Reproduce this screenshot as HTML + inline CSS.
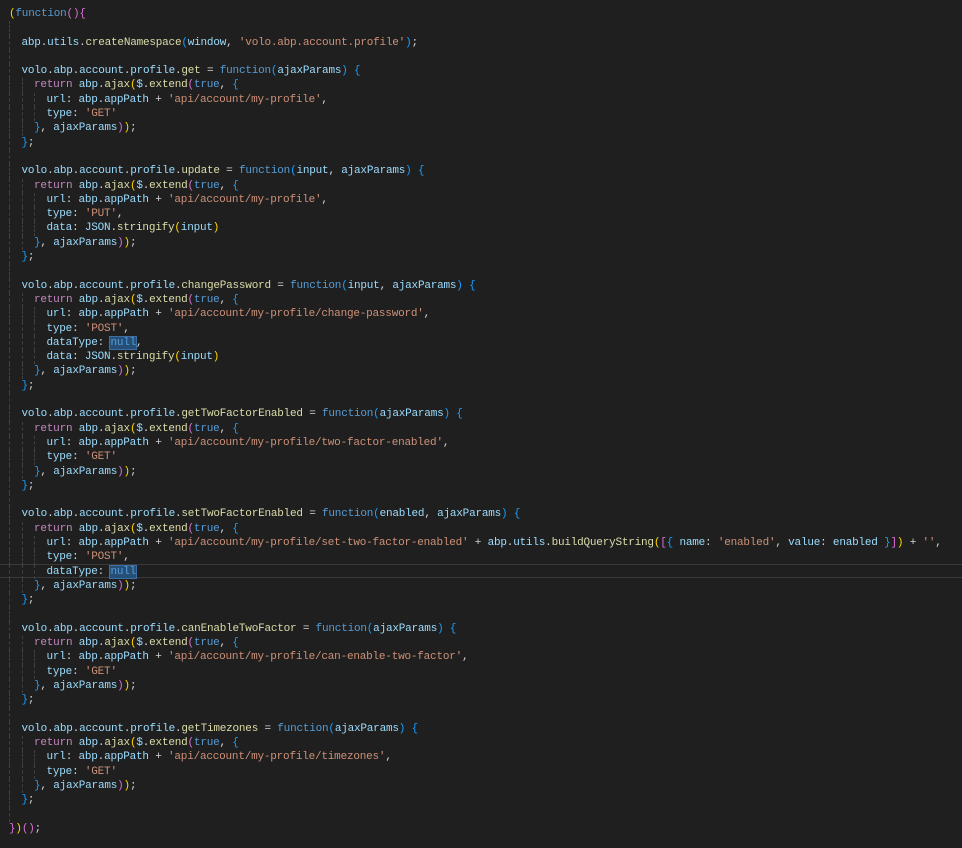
<!DOCTYPE html>
<html><head><meta charset="utf-8"><style>
html,body{margin:0;padding:0;background:#1f1f1f;width:962px;height:848px;overflow:hidden}
pre{position:absolute;left:9px;top:7px;margin:0;font-family:"Liberation Mono",monospace;font-size:11px;letter-spacing:-0.21px;line-height:14.3px;color:#d4d4d4;white-space:pre}
i{display:inline-block;width:12.5px;height:14.3px;vertical-align:top;box-sizing:border-box;border-left:1px dashed #404040}
.v{color:#9cdcfe}.f{color:#dcdcaa}.s{color:#ce9178}.k{color:#569cd6}.r{color:#c586c0}.g{color:#ffd700}.p{color:#da70d6}.b{color:#179fff}
.hl{background:#264f78;outline:1px solid #3a6ea5}
.cur{position:absolute;left:0;top:564px;width:962px;height:14px;border-top:1px solid #3a3a3a;border-bottom:1px solid #3a3a3a;box-sizing:border-box}
</style></head><body>
<div class="cur"></div>
<pre><span class="g">(</span><span class="k">function</span><span class="p">()</span><span class="p">{</span>
<i></i>
<i></i><span class="v">abp</span>.<span class="v">utils</span>.<span class="f">createNamespace</span><span class="b">(</span><span class="v">window</span>, <span class="s">'volo.abp.account.profile'</span><span class="b">)</span>;
<i></i>
<i></i><span class="v">volo</span>.<span class="v">abp</span>.<span class="v">account</span>.<span class="v">profile</span>.<span class="f">get</span> = <span class="k">function</span><span class="b">(</span><span class="v">ajaxParams</span><span class="b">)</span> <span class="b">{</span>
<i></i><i></i><span class="r">return</span> <span class="v">abp</span>.<span class="f">ajax</span><span class="g">(</span><span class="v">$</span>.<span class="f">extend</span><span class="p">(</span><span class="k">true</span>, <span class="b">{</span>
<i></i><i></i><i></i><span class="v">url</span>: <span class="v">abp</span>.<span class="v">appPath</span> + <span class="s">'api/account/my-profile'</span>,
<i></i><i></i><i></i><span class="v">type</span>: <span class="s">'GET'</span>
<i></i><i></i><span class="b">}</span>, <span class="v">ajaxParams</span><span class="p">)</span><span class="g">)</span>;
<i></i><span class="b">}</span>;
<i></i>
<i></i><span class="v">volo</span>.<span class="v">abp</span>.<span class="v">account</span>.<span class="v">profile</span>.<span class="f">update</span> = <span class="k">function</span><span class="b">(</span><span class="v">input</span>, <span class="v">ajaxParams</span><span class="b">)</span> <span class="b">{</span>
<i></i><i></i><span class="r">return</span> <span class="v">abp</span>.<span class="f">ajax</span><span class="g">(</span><span class="v">$</span>.<span class="f">extend</span><span class="p">(</span><span class="k">true</span>, <span class="b">{</span>
<i></i><i></i><i></i><span class="v">url</span>: <span class="v">abp</span>.<span class="v">appPath</span> + <span class="s">'api/account/my-profile'</span>,
<i></i><i></i><i></i><span class="v">type</span>: <span class="s">'PUT'</span>,
<i></i><i></i><i></i><span class="v">data</span>: <span class="v">JSON</span>.<span class="f">stringify</span><span class="g">(</span><span class="v">input</span><span class="g">)</span>
<i></i><i></i><span class="b">}</span>, <span class="v">ajaxParams</span><span class="p">)</span><span class="g">)</span>;
<i></i><span class="b">}</span>;
<i></i>
<i></i><span class="v">volo</span>.<span class="v">abp</span>.<span class="v">account</span>.<span class="v">profile</span>.<span class="f">changePassword</span> = <span class="k">function</span><span class="b">(</span><span class="v">input</span>, <span class="v">ajaxParams</span><span class="b">)</span> <span class="b">{</span>
<i></i><i></i><span class="r">return</span> <span class="v">abp</span>.<span class="f">ajax</span><span class="g">(</span><span class="v">$</span>.<span class="f">extend</span><span class="p">(</span><span class="k">true</span>, <span class="b">{</span>
<i></i><i></i><i></i><span class="v">url</span>: <span class="v">abp</span>.<span class="v">appPath</span> + <span class="s">'api/account/my-profile/change-password'</span>,
<i></i><i></i><i></i><span class="v">type</span>: <span class="s">'POST'</span>,
<i></i><i></i><i></i><span class="v">dataType</span>: <span class="k hl">null</span>,
<i></i><i></i><i></i><span class="v">data</span>: <span class="v">JSON</span>.<span class="f">stringify</span><span class="g">(</span><span class="v">input</span><span class="g">)</span>
<i></i><i></i><span class="b">}</span>, <span class="v">ajaxParams</span><span class="p">)</span><span class="g">)</span>;
<i></i><span class="b">}</span>;
<i></i>
<i></i><span class="v">volo</span>.<span class="v">abp</span>.<span class="v">account</span>.<span class="v">profile</span>.<span class="f">getTwoFactorEnabled</span> = <span class="k">function</span><span class="b">(</span><span class="v">ajaxParams</span><span class="b">)</span> <span class="b">{</span>
<i></i><i></i><span class="r">return</span> <span class="v">abp</span>.<span class="f">ajax</span><span class="g">(</span><span class="v">$</span>.<span class="f">extend</span><span class="p">(</span><span class="k">true</span>, <span class="b">{</span>
<i></i><i></i><i></i><span class="v">url</span>: <span class="v">abp</span>.<span class="v">appPath</span> + <span class="s">'api/account/my-profile/two-factor-enabled'</span>,
<i></i><i></i><i></i><span class="v">type</span>: <span class="s">'GET'</span>
<i></i><i></i><span class="b">}</span>, <span class="v">ajaxParams</span><span class="p">)</span><span class="g">)</span>;
<i></i><span class="b">}</span>;
<i></i>
<i></i><span class="v">volo</span>.<span class="v">abp</span>.<span class="v">account</span>.<span class="v">profile</span>.<span class="f">setTwoFactorEnabled</span> = <span class="k">function</span><span class="b">(</span><span class="v">enabled</span>, <span class="v">ajaxParams</span><span class="b">)</span> <span class="b">{</span>
<i></i><i></i><span class="r">return</span> <span class="v">abp</span>.<span class="f">ajax</span><span class="g">(</span><span class="v">$</span>.<span class="f">extend</span><span class="p">(</span><span class="k">true</span>, <span class="b">{</span>
<i></i><i></i><i></i><span class="v">url</span>: <span class="v">abp</span>.<span class="v">appPath</span> + <span class="s">'api/account/my-profile/set-two-factor-enabled'</span> + <span class="v">abp</span>.<span class="v">utils</span>.<span class="f">buildQueryString</span><span class="g">(</span><span class="p">[</span><span class="b">{</span> <span class="v">name</span>: <span class="s">'enabled'</span>, <span class="v">value</span>: <span class="v">enabled</span> <span class="b">}</span><span class="p">]</span><span class="g">)</span> + <span class="s">''</span>,
<i></i><i></i><i></i><span class="v">type</span>: <span class="s">'POST'</span>,
<i></i><i></i><i></i><span class="v">dataType</span>: <span class="k hl">null</span>
<i></i><i></i><span class="b">}</span>, <span class="v">ajaxParams</span><span class="p">)</span><span class="g">)</span>;
<i></i><span class="b">}</span>;
<i></i>
<i></i><span class="v">volo</span>.<span class="v">abp</span>.<span class="v">account</span>.<span class="v">profile</span>.<span class="f">canEnableTwoFactor</span> = <span class="k">function</span><span class="b">(</span><span class="v">ajaxParams</span><span class="b">)</span> <span class="b">{</span>
<i></i><i></i><span class="r">return</span> <span class="v">abp</span>.<span class="f">ajax</span><span class="g">(</span><span class="v">$</span>.<span class="f">extend</span><span class="p">(</span><span class="k">true</span>, <span class="b">{</span>
<i></i><i></i><i></i><span class="v">url</span>: <span class="v">abp</span>.<span class="v">appPath</span> + <span class="s">'api/account/my-profile/can-enable-two-factor'</span>,
<i></i><i></i><i></i><span class="v">type</span>: <span class="s">'GET'</span>
<i></i><i></i><span class="b">}</span>, <span class="v">ajaxParams</span><span class="p">)</span><span class="g">)</span>;
<i></i><span class="b">}</span>;
<i></i>
<i></i><span class="v">volo</span>.<span class="v">abp</span>.<span class="v">account</span>.<span class="v">profile</span>.<span class="f">getTimezones</span> = <span class="k">function</span><span class="b">(</span><span class="v">ajaxParams</span><span class="b">)</span> <span class="b">{</span>
<i></i><i></i><span class="r">return</span> <span class="v">abp</span>.<span class="f">ajax</span><span class="g">(</span><span class="v">$</span>.<span class="f">extend</span><span class="p">(</span><span class="k">true</span>, <span class="b">{</span>
<i></i><i></i><i></i><span class="v">url</span>: <span class="v">abp</span>.<span class="v">appPath</span> + <span class="s">'api/account/my-profile/timezones'</span>,
<i></i><i></i><i></i><span class="v">type</span>: <span class="s">'GET'</span>
<i></i><i></i><span class="b">}</span>, <span class="v">ajaxParams</span><span class="p">)</span><span class="g">)</span>;
<i></i><span class="b">}</span>;
<i></i>
<span class="p">}</span><span class="g">)</span><span class="p">()</span>;</pre>
</body></html>
